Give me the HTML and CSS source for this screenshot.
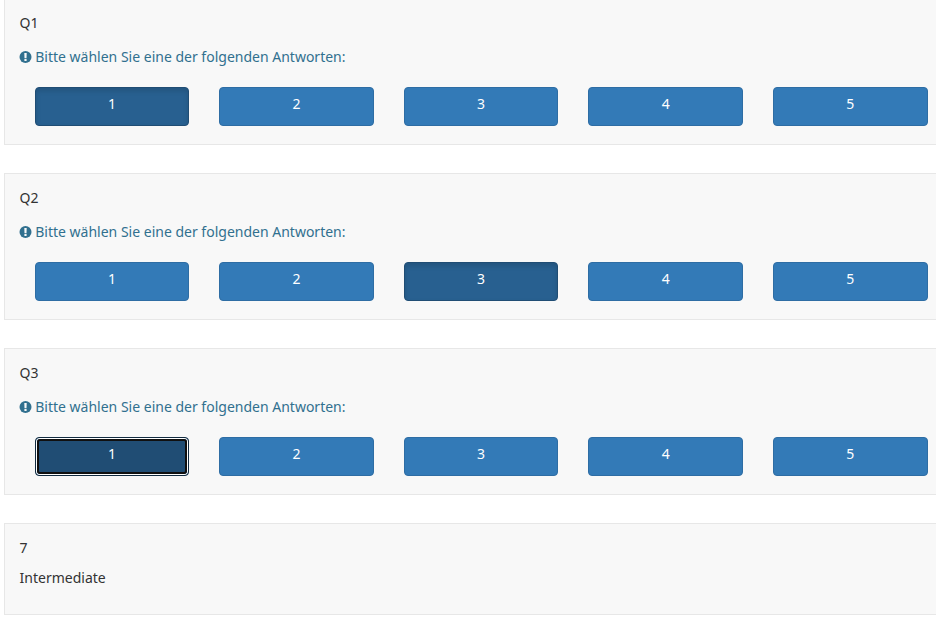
FILE: index.html
```
<!DOCTYPE html>
<html lang="de">
<head>
  <meta charset="UTF-8">
  <title>Umfrage</title>
  <meta name="viewport" content="width=device-width, initial-scale=1">
  <link rel="stylesheet" href="styles.css">
</head>
<body>
  <svg class="sprite" width="0" height="0">
    <symbol id="exclamation" viewBox="0 0 13 12">
      <circle cx="6.500" cy="6" r="6" fill="currentColor"/>
      <path fill="#f8f8f8" d="M5.300 2h2.400l-.2 5.200h-2zM5.400 8h2.200v2H5.400z"/>
    </symbol>
  </svg>

  <div class="question">
    <div class="question-text">Q1</div>
    <div class="tip"><svg class="icon"><use href="#exclamation"/></svg> Bitte wählen Sie eine der folgenden Antworten:</div>
    <div class="answers">
      <button class="btn active">1</button>
      <button class="btn">2</button>
      <button class="btn">3</button>
      <button class="btn">4</button>
      <button class="btn">5</button>
    </div>
  </div>

  <div class="question">
    <div class="question-text">Q2</div>
    <div class="tip"><svg class="icon"><use href="#exclamation"/></svg> Bitte wählen Sie eine der folgenden Antworten:</div>
    <div class="answers">
      <button class="btn">1</button>
      <button class="btn">2</button>
      <button class="btn active">3</button>
      <button class="btn">4</button>
      <button class="btn">5</button>
    </div>
  </div>

  <div class="question">
    <div class="question-text">Q3</div>
    <div class="tip"><svg class="icon"><use href="#exclamation"/></svg> Bitte wählen Sie eine der folgenden Antworten:</div>
    <div class="answers">
      <button class="btn active focus">1</button>
      <button class="btn">2</button>
      <button class="btn">3</button>
      <button class="btn">4</button>
      <button class="btn">5</button>
    </div>
  </div>

  <div class="question result">
    <div class="question-text">7</div>
    <div class="level">Intermediate</div>
  </div>
</body>
</html>
```
FILE: styles.css
```
* {
  box-sizing: border-box;
}

body {
  margin: 0;
  padding-left: 4px;
  height: 624px;
  overflow: hidden;
  background-color: #fff;
  color: #333;
  font-family: "Noto Sans", sans-serif;
  font-size: 14px;
  line-height: 20px;
}

.sprite {
  display: block;
}

.question {
  width: 940px;
  height: 147px;
  margin-bottom: 28px;
  padding: 14px 15px 0 14.6px;
  background-color: #f8f8f8;
  border: 1px solid #e7e7e7;
}

.sprite + .question {
  height: 145px;
  margin-top: 0;
  padding-top: 13px;
  border-top: none;
}

.tip {
  margin-top: 14px;
  color: #31708f;
}

.icon {
  display: inline-block;
  width: 13px;
  height: 12px;
  margin-left: -0.4px;
  margin-right: -0.6px;
  vertical-align: -1px;
}

.answers {
  display: grid;
  grid-template-columns: repeat(5, 154.6px);
  gap: 30px;
  margin: 20px 0 0 15px;
}

.btn {
  height: 39px;
  padding: 0 0 5px;
  background-color: #337ab7;
  border: 1px solid #2e6da4;
  border-radius: 4px;
  color: #fff;
  font-family: inherit;
  font-size: 14px;
  line-height: 20px;
  cursor: pointer;
}

.btn.active {
  background-color: #286090;
  border-color: #204d74;
  box-shadow: inset 0 3px 5px rgba(0, 0, 0, 0.125);
}

.btn.focus {
  position: relative;
  background-color: #204d74;
  border-color: #122b40;
  box-shadow: none;
}

/* focus ring */
.btn.focus::after {
  content: "";
  position: absolute;
  inset: 1px;
  border: 2px solid #101010;
  border-radius: 3px;
  box-shadow: 0 0 0 1px #fff;
}

.result {
  height: 92px;
  margin-bottom: 0;
}

.level {
  margin-top: 10px;
}
```
